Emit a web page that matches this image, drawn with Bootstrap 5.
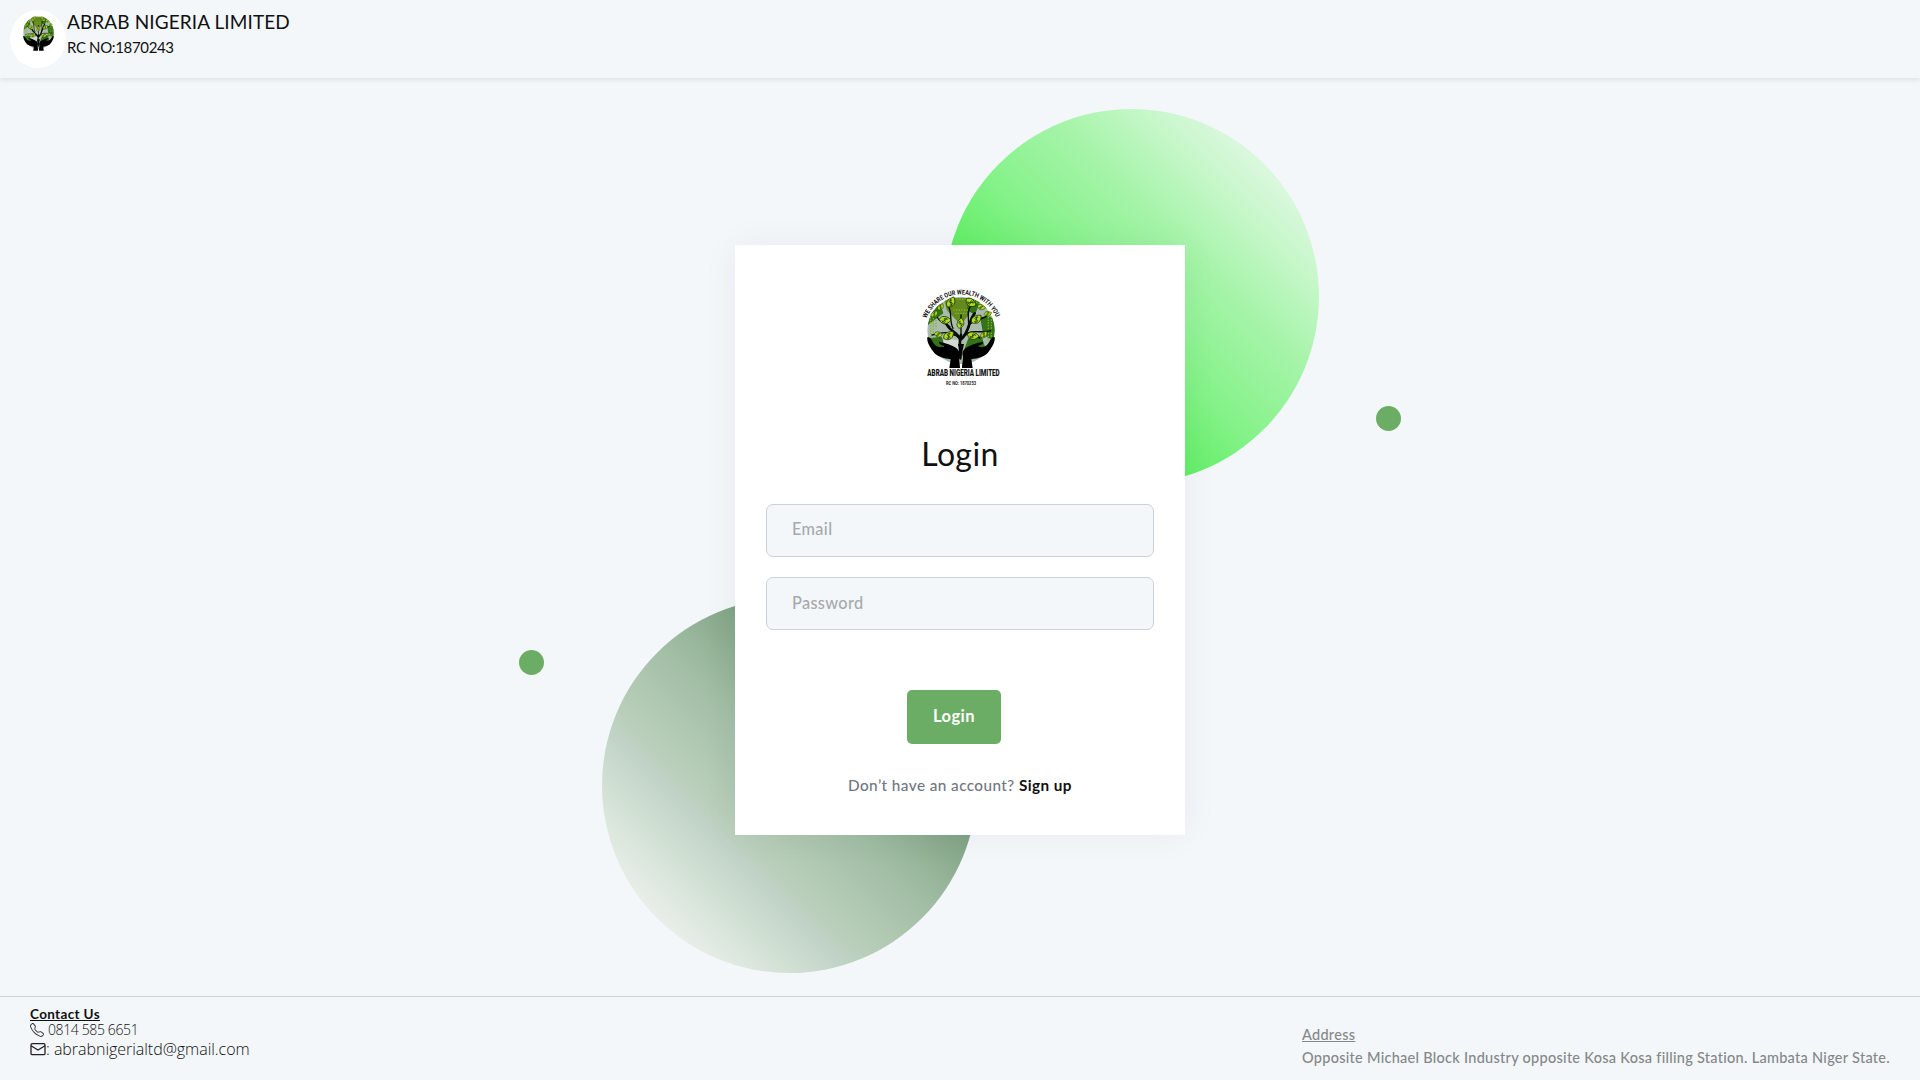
<!DOCTYPE html>
<html lang="en">
<head>
<meta charset="utf-8">
<meta name="viewport" content="width=device-width, initial-scale=1">
<title>Login - Abrab Nigeria Limited</title>
<link href="https://cdn.jsdelivr.net/npm/bootstrap@5.3.0/dist/css/bootstrap.min.css" rel="stylesheet">
<style>
body{background:#f3f7fa;font-family:Lato,"Open Sans",sans-serif;color:#111;height:1080px;overflow:hidden}
.site-head{height:78px;padding:9px 10px 0;box-shadow:0 2px 5px rgba(0,0,0,.09)}
.brand-disc{width:56px;height:58px;margin-top:1px;background:#fff;padding-top:6px}
.brand-text{padding-left:1px}
.brand-name{font-size:19px;line-height:26px;letter-spacing:.1px}
.brand-rc{font-size:15px;line-height:24px;letter-spacing:-.35px}
.stage{padding-top:167px}
.login-wrap{width:450px;height:590px}
.login-card{height:590px;padding:25px 31px 0;border:0;border-radius:0;box-shadow:0 0 35px rgba(8,21,66,.05);z-index:1}
.orb{border-radius:50%}
.orb-top{width:375px;height:375px;left:209px;top:-136px;background:linear-gradient(45deg,#62ee66 33%,#82f286 46%,#97f39b 56%,#a6f4a9 64%,#c5f7c8 76%,#dff8e2 87%)}
.orb-low{width:375px;height:375px;left:-133.5px;top:352.5px;background:linear-gradient(45deg,#e8eee8 15%,#d3e1d5 25%,#c1d3c7 33%,#bacfbb 37%,#a0bda3 53%,#7ea182 68%)}
.dot{width:25px;height:25px;background:#6bad64}
.dot-r{left:641px;top:161px}
.dot-l{left:-216px;top:405px}
.login-title{font-size:32px;line-height:40px;margin:34px 0 30px;letter-spacing:.4px}
.field{height:53px;background:#f3f7fa;border:1px solid #cad1d9;border-radius:7px;padding:0 25px 5px;font-size:16.3px;font-weight:500;letter-spacing:.35px}
.field::placeholder{color:#a6a9ac;opacity:1}
.field-gap{margin-top:20px;padding-bottom:2px}
.btn-login{width:94px;height:54px;margin:60px 12px 0 0;background:#6bad64;color:#fff;border:0;border-radius:5px;font-size:16.5px;font-weight:700;letter-spacing:.45px;padding:0 0 1px}
.signup{font-size:15.3px;line-height:22px;margin:30px 0 0;color:#6f7882;font-weight:500;letter-spacing:.43px}
.signup a{color:#111;font-weight:700}
.site-foot{height:84px;border-top:1px solid #cdd1d5;padding:0 30px}
.contact{padding-top:9px}
.contact-h{font-size:13.5px;line-height:16px;letter-spacing:.35px}
.contact-p{font:300 14px/16px "Open Sans",sans-serif;letter-spacing:-.38px}
.contact-m{font:300 16px/22px "Open Sans",sans-serif;letter-spacing:-.03px}
.addr{padding-top:26px;font-size:14.5px;line-height:23px;color:#858789;font-weight:500;letter-spacing:.28px}
</style>
<script src="https://cdn.jsdelivr.net/npm/bootstrap@5.3.0/dist/js/bootstrap.bundle.min.js"></script>
</head>
<body class="d-flex flex-column">
<svg width="0" height="0" class="position-absolute">
  <defs>
    <clipPath id="crown"><circle cx="183" cy="181" r="101"/></clipPath>
    <g id="leaf">
      <path d="M-15 7C-17-7-4-15 15-12C15 7 2 17-15 7Z" fill="#b0de1e" stroke="#182b08" stroke-width="2.2"/>
      <path d="M6-6C-2-10-8-3 0 0S2 10-7 5M3-10L-3 9" fill="none" stroke="#1c3208" stroke-width="2.3"/>
    </g>
    <symbol id="tree" viewBox="80 78 206 217" preserveAspectRatio="none">
      <g clip-path="url(#crown)">
        <rect x="80" y="78" width="206" height="206" fill="#a9bcae"/>
        <path d="M132 84H205V135L183 165L140 120Z" fill="#64891e"/>
        <path d="M205 80L240 95L225 135L200 120ZM240 140H286V215L250 195ZM205 205L245 198L256 235L205 255L193 238ZM82 205L125 200L140 238L95 235ZM84 120L120 100L130 130L84 165Z" fill="#347318"/>
        <path d="M130 205L175 210V260L130 240Z" fill="#d4d9d4"/>
        <g stroke="#87b42b" stroke-width="4" stroke-dasharray="4 4" fill="none"><path d="M92 125V205M100 120V190M112 110L150 88M170 88H205M265 125V210M274 140V200M160 120H205M165 130H200M215 88L264 118M108 150V175"/></g>
      </g>
      <g fill="none" stroke="#080b06" stroke-linecap="round">
        <path d="M181 265C182 236 176 212 183 195M181 210C170 178 144 190 133 144M183 208C209 188 205 150 224 130" stroke-width="8"/>
        <path d="M159 175C147 151 157 132 146 110M150 170C136 158 120 160 112 142M174 202C150 178 120 191 96 195M191 196C217 175 244 192 273 182M206 173C207 142 199 125 212 108M211 161C236 143 248 152 268 132M183 198V135M166 196C147 190 140 193 133 204M199 194C218 184 228 194 239 204" stroke-width="4"/>
      </g>
      <use href="#leaf" transform="translate(153 98) rotate(-25)"/>
      <use href="#leaf" transform="translate(211 98) rotate(65)"/>
      <use href="#leaf" transform="translate(134 151) rotate(35)"/>
      <use href="#leaf" transform="translate(229 149) rotate(-5)"/>
      <use href="#leaf" transform="translate(182 161) rotate(-45) scale(.9)"/>
      <use href="#leaf" transform="translate(146 198) rotate(-5)"/>
      <use href="#leaf" transform="translate(218 198) rotate(40)"/>
      <use href="#leaf" transform="translate(114 194) rotate(40) scale(.7)"/>
      <use href="#leaf" transform="translate(252 195) rotate(-15) scale(.7)"/>
      <use href="#leaf" transform="translate(103 133) rotate(-10) scale(.7)"/>
      <use href="#leaf" transform="translate(122 112) rotate(-20) scale(.65)"/>
      <use href="#leaf" transform="translate(243 112) rotate(45) scale(.7)"/>
      <use href="#leaf" transform="translate(263 132) rotate(20) scale(.65)"/>
      <path id="hand" d="M82 202C88 199 94 207 98 215C103 225 111 231 121 232L133 229C126 224 115 223 117 215C132 218 145 222 156 227C169 232 178 239 179 252C174 264 180 277 180 294H148L152 268C132 265 110 261 99 244C88 229 80 215 82 202Z" fill="#000"/>
      <use href="#hand" transform="matrix(-1 0 0 1 366 0)"/>
      <path d="M174 222L183 265L192 222Z" fill="#000"/>
    </symbol>
  </defs>
</svg>

<header class="site-head d-flex flex-shrink-0">
  <div class="brand-disc rounded-circle text-center flex-shrink-0 lh-1">
    <svg width="31" height="35"><use href="#tree"/></svg>
  </div>
  <div class="brand-text">
    <div class="brand-name">ABRAB NIGERIA LIMITED</div>
    <div class="brand-rc">RC NO:1870243</div>
  </div>
</header>

<main class="stage flex-grow-1 d-flex justify-content-center align-items-start">
  <div class="login-wrap position-relative">
    <div class="orb orb-top position-absolute"></div>
    <div class="orb orb-low position-absolute"></div>
    <div class="orb dot dot-r position-absolute"></div>
    <div class="orb dot dot-l position-absolute"></div>
    <div class="card login-card d-flex align-items-stretch text-center">
      <svg class="mx-auto flex-shrink-0 overflow-visible" width="120" height="130" viewBox="0 0 360 390">
        <path id="motto" d="M80 145A112 112 0 0 1 289 145" fill="none"/>
        <text font-family="Roboto, sans-serif" font-weight="700" font-size="20" fill="#111"><textPath href="#motto" textLength="266" lengthAdjust="spacingAndGlyphs">WE SHARE OUR WEALTH WITH YOU</textPath></text>
        <use href="#tree" x="80" y="78" width="206" height="217"/>
        <text x="82" y="319" textLength="217" lengthAdjust="spacingAndGlyphs" font-family="Roboto, sans-serif" font-weight="900" font-size="25" fill="#111">ABRAB NIGERIA LIMITED</text>
        <text x="138" y="345" textLength="90" lengthAdjust="spacingAndGlyphs" font-family="Roboto, sans-serif" font-weight="700" font-size="17" fill="#222">RC NO: 1870253</text>
      </svg>
      <h1 class="login-title fw-normal">Login</h1>
      <form>
        <input class="form-control field" type="email" placeholder="Email">
        <input class="form-control field field-gap" type="password" placeholder="Password">
        <button class="btn btn-login" type="button">Login</button>
        <p class="signup">Don’t have an account? <a class="text-decoration-none" href="#">Sign up</a></p>
      </form>
    </div>
  </div>
</main>

<footer class="site-foot d-flex justify-content-between flex-shrink-0">
  <div class="contact">
    <div class="contact-h fw-bold text-decoration-underline">Contact Us</div>
    <div class="contact-p d-flex align-items-center">
      <svg class="me-1" width="14" height="14" viewBox="0 0 16 16" fill="#333"><path d="M3.654 1.328a.678.678 0 0 0-1.015-.063L1.605 2.3c-.483.484-.661 1.169-.45 1.77a17.568 17.568 0 0 0 4.168 6.608 17.569 17.569 0 0 0 6.608 4.168c.601.211 1.286.033 1.77-.45l1.034-1.034a.678.678 0 0 0-.063-1.015l-2.307-1.794a.678.678 0 0 0-.58-.122l-2.19.547a1.745 1.745 0 0 1-1.657-.459L5.482 8.062a1.745 1.745 0 0 1-.46-1.657l.548-2.19a.678.678 0 0 0-.122-.58L3.654 1.328zM1.884.511a1.745 1.745 0 0 1 2.612.163L6.29 2.98c.329.423.445.974.315 1.494l-.547 2.19a.678.678 0 0 0 .178.643l2.457 2.457a.678.678 0 0 0 .644.178l2.189-.547a1.745 1.745 0 0 1 1.494.315l2.306 1.794c.829.645.905 1.87.163 2.611l-1.034 1.034c-.74.74-1.846 1.065-2.877.702a18.634 18.634 0 0 1-7.01-4.42 18.634 18.634 0 0 1-4.42-7.009c-.362-1.03-.037-2.137.703-2.877L1.885.511z"/></svg><span>0814 585 6651</span>
    </div>
    <div class="contact-m d-flex align-items-center">
      <svg width="16" height="16" viewBox="0 0 16 16" fill="none" stroke="#222" stroke-width="1.3"><rect x="1" y="2.7" width="14" height="11" rx="1.3"/><path d="M1 4.8L8 9L15 4.8"/></svg><span>: abrabnigerialtd@gmail.com</span>
    </div>
  </div>
  <div class="addr">
    <div><span class="text-decoration-underline">Address</span></div>
    <div class="addr-line">Opposite Michael Block Industry opposite Kosa Kosa filling Station. Lambata Niger State.</div>
  </div>
</footer>
</body>
</html>
